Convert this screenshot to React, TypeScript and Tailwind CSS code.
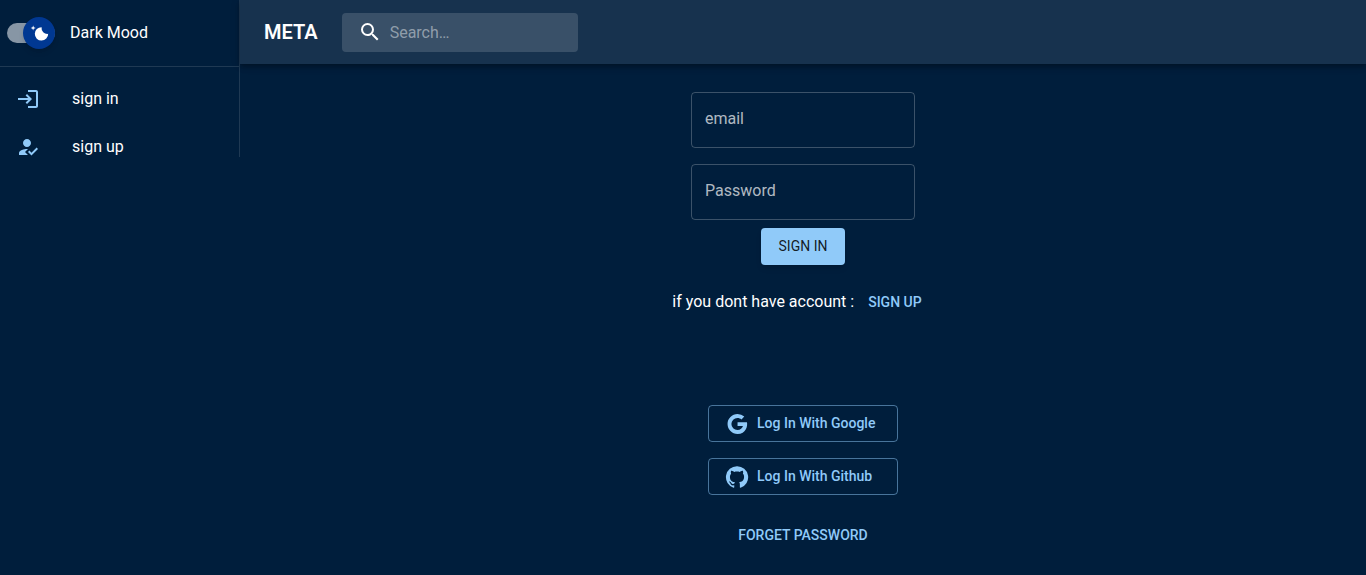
import { useState } from "react";
import type { ReactNode } from "react";
import { MdHowToReg, MdLogin, MdSearch } from "react-icons/md";

function MoonSwitch() {
  const [dark, setDark] = useState(true);
  return (
    <label className="flex h-[66px] cursor-pointer items-center gap-[15px] px-[7px]">
      <input
        type="checkbox"
        role="switch"
        checked={dark}
        onChange={(e) => setDark(e.target.checked)}
        className="peer sr-only"
      />
      <span className="flex h-5 w-12 items-center rounded-full bg-[#8796a5] peer-checked:justify-end">
        <span className="flex size-8 items-center justify-center rounded-full bg-[#003892] shadow-md">
          <svg viewBox="0 0 20 20" className="size-5 fill-white" aria-hidden="true">
            <path d="M4.2 2.5l-.7 1.8-1.8.7 1.8.7.6 1.9.6-1.9L6.7 5l-1.9-.7-.6-1.8zm15 8.3a6.7 6.7 0 11-6.6-6.6 5.8 5.8 0 006.6 6.6z" />
          </svg>
        </span>
      </span>
      <span>Dark Mood</span>
    </label>
  );
}

function NavItem({ icon, children }: { icon: ReactNode; children: ReactNode }) {
  return (
    <li>
      <a href="#" className="flex h-5 items-center gap-8 px-4">
        <span className="text-2xl text-[#90caf9]">{icon}</span>
        <span>{children}</span>
      </a>
    </li>
  );
}

function Field({ id, label, type }: { id: string; label: string; type: string }) {
  const [value, setValue] = useState("");
  return (
    <div className="grid items-center">
      <input
        id={id}
        type={type}
        value={value}
        onChange={(e) => setValue(e.target.value)}
        className="col-start-1 row-start-1 h-14 w-56 rounded border border-white/23 bg-transparent px-[13px] outline-none focus:border-[#90caf9]"
      />
      {value === "" && (
        <label
          htmlFor={id}
          className="pointer-events-none col-start-1 row-start-1 px-3.5 pb-0.5 text-white/70"
        >
          {label}
        </label>
      )}
    </div>
  );
}

function SocialButton({ icon, children }: { icon: ReactNode; children: ReactNode }) {
  return (
    <button
      type="button"
      className="flex h-[37px] w-[190px] items-center gap-2 rounded border border-[#90caf9]/50 px-4 text-sm font-medium text-[#90caf9]"
    >
      <svg viewBox="0 0 24 24" className="size-6 fill-current" aria-hidden="true">
        {icon}
      </svg>
      <span className="pb-0.5">{children}</span>
    </button>
  );
}

export default function App() {
  return (
    <div className="flex min-h-screen items-start bg-[#001e3c] font-['Roboto',sans-serif] text-base text-white">
      <aside className="w-60 shrink-0 border-r border-white/12">
        <MoonSwitch />
        <nav className="border-t border-white/12 pt-[22px]">
          <ul className="flex flex-col gap-7">
            <NavItem icon={<MdLogin />}>sign in</NavItem>
            <NavItem icon={<MdHowToReg />}>sign up</NavItem>
          </ul>
        </nav>
      </aside>

      <div className="min-w-0 flex-1">
        <header className="flex h-16 items-center gap-6 bg-[#17324e] px-6 shadow-[0_2px_4px_-1px_rgba(0,0,0,0.2),0_4px_5px_0_rgba(0,0,0,0.14),0_1px_10px_0_rgba(0,0,0,0.12)]">
          <h1 className="text-xl font-semibold">META</h1>
          <label className="flex h-[39px] w-[236px] items-center gap-2 rounded bg-white/15 px-4">
            <MdSearch className="size-6 shrink-0" />
            <input
              type="search"
              aria-label="Search"
              placeholder="Search…"
              className="w-full min-w-0 bg-transparent pt-px outline-none placeholder:text-white/45"
            />
          </label>
        </header>

        <main className="flex flex-col items-center pt-7">
          <form className="flex flex-col items-center" onSubmit={(e) => e.preventDefault()}>
            <div className="flex flex-col gap-4">
              <Field id="email" label="email" type="email" />
              <Field id="password" label="Password" type="password" />
            </div>
            <button
              type="submit"
              className="mt-2 h-[37px] w-[84px] rounded bg-[#90caf9] pb-0.5 text-sm text-black/87 shadow-md"
            >
              SIGN IN
            </button>
          </form>

          <p className="mt-[18px] flex h-[37px] items-center">
            if you dont have account :
            <button type="button" className="pr-3 pl-3.5 text-sm font-medium text-[#90caf9]">
              SIGN UP
            </button>
          </p>

          <div className="mt-[85px] flex flex-col gap-4">
            <SocialButton
              icon={
                <path d="M12.545 10.239v3.821h5.445c-.712 2.315-2.647 3.972-5.445 3.972a6.033 6.033 0 1 1 0-12.064c1.498 0 2.866.549 3.921 1.453l2.814-2.814A9.969 9.969 0 0 0 12.545 2C7.021 2 2.543 6.477 2.543 12s4.478 10 10.002 10c8.396 0 10.249-7.85 9.426-11.748z" />
              }
            >
              Log In With Google
            </SocialButton>
            <SocialButton
              icon={
                <path d="M12 1.27a11 11 0 00-3.48 21.46c.55.09.73-.28.73-.55v-1.84c-3.03.64-3.67-1.46-3.67-1.46-.55-1.29-1.28-1.65-1.28-1.65-.92-.65.1-.65.1-.65 1.1 0 1.73 1.1 1.73 1.1.92 1.65 2.57 1.2 3.21.92a2 2 0 01.64-1.47c-2.47-.27-5.04-1.19-5.04-5.5 0-1.1.46-2.1 1.2-2.84a3.76 3.76 0 010-2.93s.91-.28 3.11 1.1c1.8-.49 3.7-.49 5.5 0 2.1-1.38 3.02-1.1 3.02-1.1a3.76 3.76 0 01.1 2.93c.83.74 1.2 1.74 1.2 2.94 0 4.21-2.57 5.13-5.04 5.4.45.37.82.92.82 2.02v3.03c0 .27.1.64.73.55A11 11 0 0012 1.27" />
              }
            >
              Log In With Github
            </SocialButton>
          </div>

          <button type="button" className="mt-[22px] p-2 text-sm font-medium text-[#90caf9]">
            FORGET PASSWORD
          </button>
        </main>
      </div>
    </div>
  );
}
